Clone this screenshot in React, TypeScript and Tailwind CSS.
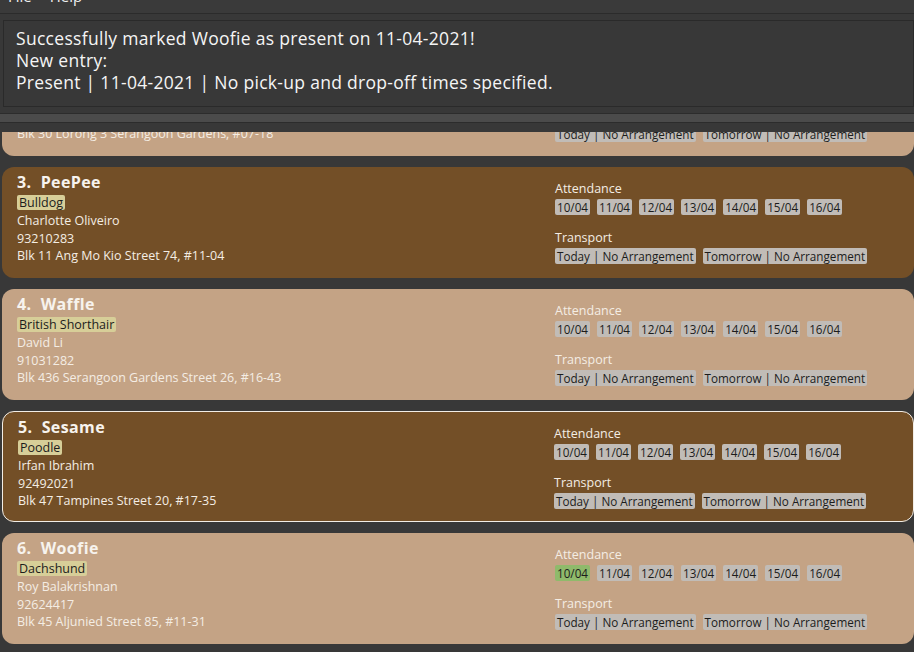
import React from 'react'

type Pet = {
  index: number
  name: string
  breed: string
  owner: string
  phone: string
  address: string
  present?: boolean
}

const pets: Pet[] = [
  { index: 2, name: 'Bailey', breed: 'Golden Retriever', owner: 'Bernice Yu', phone: '99272758', address: 'Blk 30 Lorong 3 Serangoon Gardens, #07-18' },
  { index: 3, name: 'PeePee', breed: 'Bulldog', owner: 'Charlotte Oliveiro', phone: '93210283', address: 'Blk 11 Ang Mo Kio Street 74, #11-04' },
  { index: 4, name: 'Waffle', breed: 'British Shorthair', owner: 'David Li', phone: '91031282', address: 'Blk 436 Serangoon Gardens Street 26, #16-43' },
  { index: 5, name: 'Sesame', breed: 'Poodle', owner: 'Irfan Ibrahim', phone: '92492021', address: 'Blk 47 Tampines Street 20, #17-35' },
  { index: 6, name: 'Woofie', breed: 'Dachshund', owner: 'Roy Balakrishnan', phone: '92624417', address: 'Blk 45 Aljunied Street 85, #11-31', present: true },
]

const days = ['10/04', '11/04', '12/04', '13/04', '14/04', '15/04', '16/04']

function Chip({ children, green }: { children: React.ReactNode; green?: boolean }) {
  return (
    <span
      className={
        'h-[16px] px-[2px] rounded-[2px] text-[11.7px] leading-[16px] text-[#1c1c1c] ' +
        (green ? 'bg-[#8fba6b]' : 'bg-[#c1bcb7]')
      }
    >
      {children}
    </span>
  )
}

function PetCard({ pet, selected }: { pet: Pet; selected: boolean }) {
  const dark = pet.index % 2 === 1
  return (
    <div
      className={
        'flex h-[111px] shrink-0 rounded-[12px] pl-[15px] ' +
        (dark ? 'bg-[#734f27] ' : 'bg-[#c4a385] ') +
        (selected ? 'border border-[#f2ede6]' : '')
      }
    >
      {/* Left: details */}
      <div className="flex-1 flex flex-col pt-[5px] text-[#f4ede4]">
        <div className="whitespace-pre text-[16px] leading-[20px] font-bold tracking-[0.4px] text-[#f7f3ee]">
          {pet.index}.  {pet.name}
        </div>
        <div className="mt-[3px] flex">
          <span className="h-[15px] px-[2px] rounded-[2px] bg-[#d7ce98] text-[12.5px] leading-[15px] text-[#1c1c1c]">
            {pet.breed}
          </span>
        </div>
        <div className="mt-[2px] text-[12.5px] leading-[17.5px]">{pet.owner}</div>
        <div className="text-[12.5px] leading-[17.5px]">{pet.phone}</div>
        <div className="text-[12.5px] leading-[17.5px]">{pet.address}</div>
      </div>

      {/* Right: attendance + transport */}
      <div className="w-[359px] shrink-0 flex flex-col pt-[14px] text-[#f4ede4]">
        <div className="text-[12.5px] leading-[16px]">Attendance</div>
        <div className="mt-[2px] flex gap-[7px]">
          {days.map((d, i) => (
            <Chip key={d} green={pet.present && i === 0}>
              {d}
            </Chip>
          ))}
        </div>
        <div className="mt-[15px] text-[12.5px] leading-[16px]">Transport</div>
        <div className="mt-[2px] flex gap-[7px]">
          <Chip>Today | No Arrangement</Chip>
          <Chip>Tomorrow | No Arrangement</Chip>
        </div>
      </div>
    </div>
  )
}

export default function App() {
  return (
    <div
      className="w-[914px] h-[652px] overflow-hidden bg-[#383838] flex flex-col"
      style={{ fontFamily: '"Open Sans", "Liberation Sans", sans-serif' }}
    >
      {/* Menu bar, scrolled partly out of view */}
      <div className="h-[14px] shrink-0 overflow-hidden bg-[#3a3a3a] border-b border-[#2b2b2b]">
        <div className="-mt-[14px] flex gap-[18px] pl-[8px] text-[15px] leading-[20px] text-[#f0f0f0]">
          <span>File</span>
          <span>Help</span>
        </div>
      </div>

      {/* Result display */}
      <div className="mt-[6px] ml-[3px] h-[87px] shrink-0 border border-[#2a2a2a] px-[12px] pt-[6px] text-[17.5px] leading-[22px] tracking-[0.3px] text-[#f5f5f5]">
        <div>Successfully marked Woofie as present on 11-04-2021!</div>
        <div>New entry:</div>
        <div>Present | 11-04-2021 | No pick-up and drop-off times specified.</div>
      </div>

      {/* Splitter */}
      <div className="mt-[6px] h-[10px] shrink-0 bg-[#4b4b4b] border-y border-[#2c2c2c]" />

      {/* Pet list */}
      <div className="mt-[9px] flex-1 overflow-hidden pl-[2px]">
        <div className="-mt-[87px] flex flex-col gap-[11px]">
          {pets.map((p) => (
            <PetCard key={p.index} pet={p} selected={p.index === 5} />
          ))}
        </div>
      </div>
    </div>
  )
}
